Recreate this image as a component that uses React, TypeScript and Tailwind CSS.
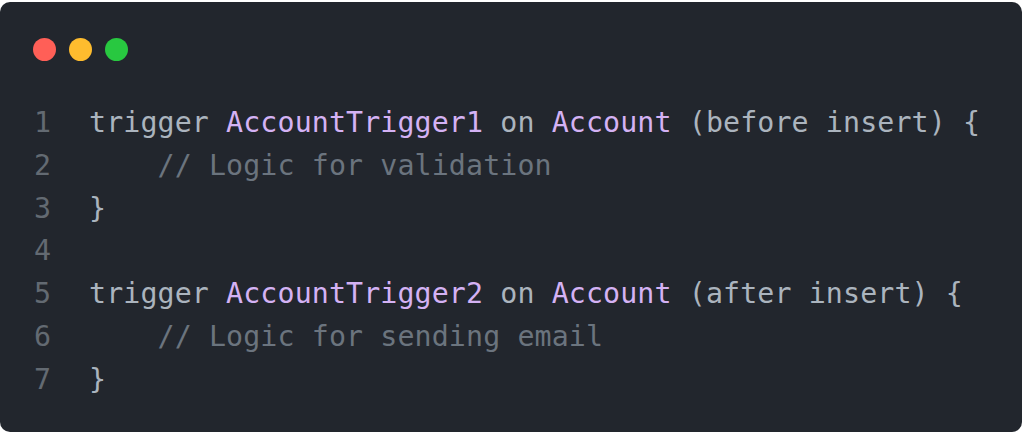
type Token = { text: string; kind?: 'name' | 'comment' }

const lines: Token[][] = [
  [{ text: 'trigger ' }, { text: 'AccountTrigger1', kind: 'name' }, { text: ' on ' }, { text: 'Account', kind: 'name' }, { text: ' (before insert) {' }],
  [{ text: '    ' }, { text: '// Logic for validation', kind: 'comment' }],
  [{ text: '}' }],
  [],
  [{ text: 'trigger ' }, { text: 'AccountTrigger2', kind: 'name' }, { text: ' on ' }, { text: 'Account', kind: 'name' }, { text: ' (after insert) {' }],
  [{ text: '    ' }, { text: '// Logic for sending email', kind: 'comment' }],
  [{ text: '}' }],
]

function colorFor(kind?: Token['kind']) {
  if (kind === 'name') return 'text-[#d4b2f4]'
  if (kind === 'comment') return 'text-[#6b747e]'
  return 'text-[#abb4be]'
}

export default function App() {
  return (
    <div className="w-[1024px] h-[434px] bg-white pt-[2px]">
      <div className="w-[1022px] h-[430px] rounded-[10px] bg-[#22262d] pt-[36px]">
        <div className="flex gap-[13px] pl-[33px]">
          <span className="w-[23px] h-[23px] rounded-full bg-[#ff5f57]" />
          <span className="w-[23px] h-[23px] rounded-full bg-[#febc2e]" />
          <span className="w-[23px] h-[23px] rounded-full bg-[#28c840]" />
        </div>
        <div
          className="mt-[41px] pl-[34px] text-[28.3px] leading-[42.8px] tracking-[0.1px] whitespace-pre"
          style={{ fontFamily: '"DejaVu Sans Mono", "Liberation Mono", monospace' }}
        >
          {lines.map((line, i) => (
            <div key={i} className="flex h-[42.8px]">
              <span className="w-[17px] text-right text-[#636a72]">{i + 1}</span>
              <span className="ml-[38px]">
                {line.map((t, j) => (
                  <span key={j} className={colorFor(t.kind)}>{t.text}</span>
                ))}
              </span>
            </div>
          ))}
        </div>
      </div>
    </div>
  )
}
